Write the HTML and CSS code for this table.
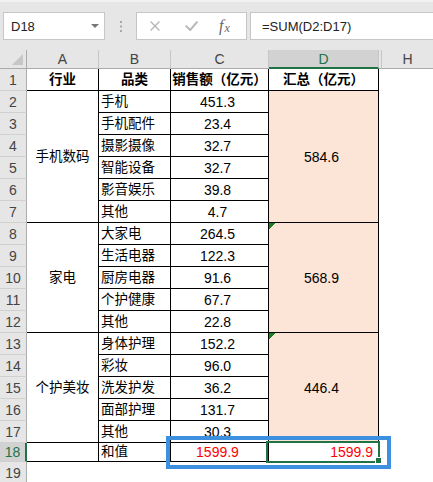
FILE: index.html
```html
<!DOCTYPE html>
<html lang="zh-CN">
<head>
<meta charset="utf-8">
<title>Sheet</title>
<link rel="stylesheet" href="styles.css">
</head>
<body>
<div class="toolbar">
  <div class="namebox"><span>D18</span><svg class="caret" width="8" height="4" viewBox="0 0 8 4"><polygon points="0,0 8,0 4,4" fill="#777"/></svg></div>
  <div class="grip"><svg width="2" height="11" viewBox="0 0 2 11"><rect x="0" y="0" width="2" height="2" fill="#a8a8a8"/><rect x="0" y="4.5" width="2" height="2" fill="#a8a8a8"/><rect x="0" y="9" width="2" height="2" fill="#a8a8a8"/></svg></div>
  <div class="fxbtns">
    <svg class="ic-x" width="10" height="10" viewBox="0 0 10 10"><path d="M0.6 0.6 L9.4 9.4 M9.4 0.6 L0.6 9.4" stroke="#b8b8b8" stroke-width="1.4" fill="none"/></svg>
    <svg class="ic-ok" width="13" height="10" viewBox="0 0 13 10"><path d="M0.7 4.6 L5.2 9 L12.4 0.6" stroke="#b8b8b8" stroke-width="2" fill="none"/></svg>
    <span class="fx"><i class="f">f</i><i class="x">x</i></span>
  </div>
  <div class="formula">=SUM(D2:D17)</div>
</div>

<div class="sheet">
  <div class="ch corner"><svg width="11" height="11" viewBox="0 0 11 11"><polygon points="11,0 11,11 0,11" fill="#c6c6c6"/></svg></div>
  <div class="ch">A</div>
  <div class="ch">B</div>
  <div class="ch">C</div>
  <div class="ch sel">D</div>
  <div class="ch gap"></div>
  <div class="ch h">H</div>

  <div class="rh">1</div>
  <div class="c hd">行业</div>
  <div class="c hd">品类</div>
  <div class="c hd">销售额（亿元）</div>
  <div class="c hd">汇总（亿元）</div>

  <div class="rh">2</div>
  <div class="c cn cjk s6">手机数码</div>
  <div class="c l cjk">手机</div>
  <div class="c num">451.3</div>
  <div class="c num sum s6">584.6</div>

  <div class="rh">3</div>
  <div class="c l cjk">手机配件</div>
  <div class="c num">23.4</div>

  <div class="rh">4</div>
  <div class="c l cjk">摄影摄像</div>
  <div class="c num">32.7</div>

  <div class="rh">5</div>
  <div class="c l cjk">智能设备</div>
  <div class="c num">32.7</div>

  <div class="rh">6</div>
  <div class="c l cjk">影音娱乐</div>
  <div class="c num">39.8</div>

  <div class="rh">7</div>
  <div class="c l cjk">其他</div>
  <div class="c num">4.7</div>

  <div class="rh">8</div>
  <div class="c cn cjk s5">家电</div>
  <div class="c l cjk">大家电</div>
  <div class="c num">264.5</div>
  <div class="c num sum tri s5">568.9</div>

  <div class="rh">9</div>
  <div class="c l cjk">生活电器</div>
  <div class="c num">122.3</div>

  <div class="rh">10</div>
  <div class="c l cjk">厨房电器</div>
  <div class="c num">91.6</div>

  <div class="rh">11</div>
  <div class="c l cjk">个护健康</div>
  <div class="c num">67.7</div>

  <div class="rh">12</div>
  <div class="c l cjk">其他</div>
  <div class="c num">22.8</div>

  <div class="rh">13</div>
  <div class="c cn cjk s5">个护美妆</div>
  <div class="c l cjk">身体护理</div>
  <div class="c num">152.2</div>
  <div class="c num sum tri s5">446.4</div>

  <div class="rh">14</div>
  <div class="c l cjk">彩妆</div>
  <div class="c num">96.0</div>

  <div class="rh">15</div>
  <div class="c l cjk">洗发护发</div>
  <div class="c num">36.2</div>

  <div class="rh">16</div>
  <div class="c l cjk">面部护理</div>
  <div class="c num">131.7</div>

  <div class="rh">17</div>
  <div class="c l cjk">其他</div>
  <div class="c num">30.3</div>

  <div class="rh sel">18</div>
  <div class="c"></div>
  <div class="c l cjk">和值</div>
  <div class="c num red">1599.9</div>
  <div class="c r red">1599.9</div>

  <div class="rh">19</div>

  <div class="selbox"></div>
  <div class="handle"></div>
  <div class="annot"></div>
</div>
</body>
</html>
```

FILE: styles.css
```css
* {
  box-sizing: border-box;
}

body {
  margin: 0;
  width: 433px;
  height: 482px;
  overflow: hidden;
  background: #ffffff;
  font-family: "Liberation Sans", "Noto Sans CJK SC", sans-serif;
}

/* ---------- formula bar ---------- */
.toolbar {
  height: 50px;
  background: #e6e6e6;
  border-top: 2px solid #f1f1f1;
  padding: 10px 0 0 3px;
  display: flex;
  align-items: flex-start;
}

.namebox {
  width: 102px;
  height: 28px;
  background: #ffffff;
  border: 1px solid #c6c6c6;
  display: flex;
  align-items: center;
  justify-content: space-between;
  padding: 0 5px 0 7px;
  font-size: 13px;
  color: #222222;
}

.caret {
  display: block;
}

.grip {
  width: 31px;
  height: 28px;
  display: flex;
  align-items: center;
  justify-content: center;
}

.grip svg {
  display: block;
}

.fxbtns {
  width: 111px;
  height: 28px;
  background: #ffffff;
  border: 1px solid #c6c6c6;
  display: flex;
  align-items: center;
  padding-left: 13px;
}

.ic-x {
  display: block;
}

.ic-ok {
  display: block;
  margin-left: 25px;
}

.fx {
  margin-left: 21px;
  font-family: "Liberation Serif", serif;
  color: #666666;
  display: flex;
  align-items: baseline;
}

.fx .f {
  font-size: 16px;
}

.fx .x {
  font-size: 12px;
  margin-left: 1px;
  position: relative;
  top: 1px;
}

.formula {
  flex: 1;
  height: 28px;
  margin-left: 3px;
  background: #ffffff;
  border: 1px solid #c6c6c6;
  border-right: none;
  padding-left: 11px;
  display: flex;
  align-items: center;
  font-size: 13px;
  color: #222222;
}

/* ---------- sheet grid ---------- */
.sheet {
  position: relative;
  display: grid;
  grid-template-columns: 27px 72px 72px 98px 110px 3px 1fr;
  grid-template-rows: 19px repeat(17, 22px) 19px 22px;
}

.ch {
  background: #e6e6e6;
  border-right: 1px solid #c6c6c6;
  border-bottom: 1px solid #ababab;
  display: flex;
  align-items: center;
  justify-content: center;
  font-size: 14px;
  color: #444444;
}

.ch.corner {
  justify-content: flex-end;
  align-items: flex-end;
  padding: 0 3px 3px 0;
  border-right-color: #ababab;
}

.ch.corner svg {
  display: block;
}

.ch.sel {
  background: #d2d2d2;
  border-bottom: 2px solid #217346;
  color: #217346;
}

.ch.h {
  border-right: none;
}

.rh {
  grid-column: 1;
  background: #e6e6e6;
  border-right: 1px solid #ababab;
  border-bottom: 1px solid #d0d0d0;
  display: flex;
  align-items: center;
  justify-content: center;
  font-size: 14px;
  color: #444444;
}

.rh.sel {
  background: #d2d2d2;
  border-right: 2px solid #217346;
  color: #217346;
}

.c {
  border-right: 1px solid #000000;
  border-bottom: 1px solid #000000;
  display: flex;
  align-items: center;
  font-size: 14px;
  line-height: 1;
  white-space: nowrap;
  color: #000000;
}

.cjk {
  font-size: 13.5px;
}

.hd {
  justify-content: center;
  font-weight: bold;
  font-size: 13.5px;
}

.cn {
  justify-content: center;
}

.l {
  padding-left: 2px;
}

.num {
  justify-content: center;
  padding-right: 4px;
}

.r {
  justify-content: flex-end;
  padding-right: 5px;
}

.red {
  color: #ff0000;
}

.s6 {
  grid-row: span 6;
}

.s5 {
  grid-row: span 5;
}

.sum {
  background: #fce4d6;
}

.sum.tri {
  background: linear-gradient(135deg, #1b7d1b 4.3px, transparent 4.3px), #fce4d6;
}

/* ---------- overlays ---------- */
.selbox {
  position: absolute;
  left: 266px;
  top: 391px;
  width: 114px;
  height: 22px;
  border: 2px solid #217346;
}

.handle {
  position: absolute;
  left: 375px;
  top: 407px;
  width: 7px;
  height: 7px;
  background: #217346;
  border: 1px solid #ffffff;
}

.annot {
  position: absolute;
  left: 166px;
  top: 386px;
  width: 225px;
  height: 33px;
  border: 4px solid #3d8fe0;
}
```
